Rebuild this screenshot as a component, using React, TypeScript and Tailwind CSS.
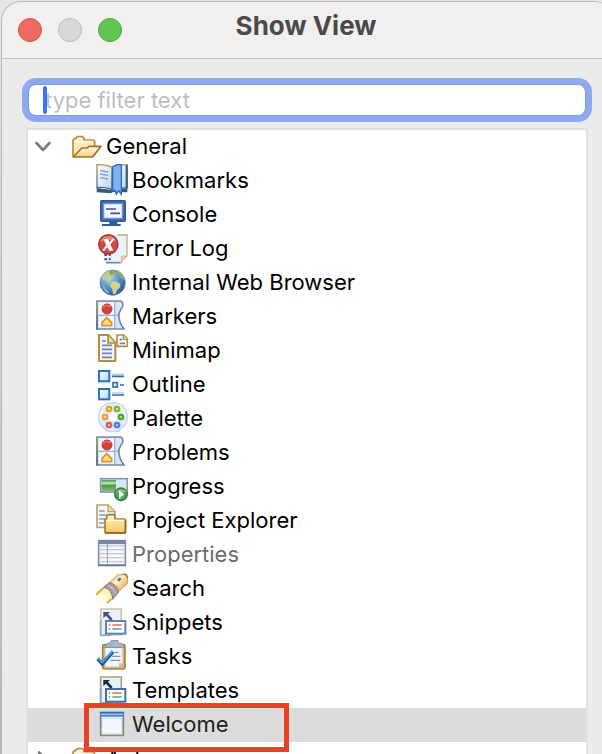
import type { ReactNode } from 'react';
import clsx from 'clsx';

// Every icon is drawn on a 96 x 102 grid, three units to the pixel
function Icon({ children }: { children: ReactNode }) {
  return (
    <svg className="h-[34px] w-8 shrink-0" viewBox="0 0 96 102" fill="none" aria-hidden="true">
      {children}
    </svg>
  );
}

function FolderIcon() {
  return (
    <Icon>
      <defs>
        <linearGradient id="folder-front" x1="0" y1="0" x2="0" y2="1">
          <stop offset="0" stopColor="#fffbe6" />
          <stop offset="1" stopColor="#f3cf7c" />
        </linearGradient>
      </defs>
      <path d="M3 78V30l5-5h4l3-5h17l4 5v5h28l4 4v17" fill="#fbe9b6" stroke="#bd8741" strokeWidth="5" strokeLinejoin="round" />
      <path d="M8 35h55M16 26h16" stroke="#fffbe9" strokeWidth="5" />
      <path d="M3 81L30 54h16l5-5h36L67 75l-7 6z" fill="url(#folder-front)" stroke="#a86d28" strokeWidth="5" strokeLinejoin="round" />
    </Icon>
  );
}

function BookmarksIcon() {
  return (
    <Icon>
      <defs>
        <linearGradient id="book-page" x1="0" y1="0" x2="1" y2="1">
          <stop offset="0" stopColor="#ffffff" />
          <stop offset="1" stopColor="#b9d4e6" />
        </linearGradient>
        <linearGradient id="book-edge" x1="0" y1="0" x2="0" y2="1">
          <stop offset="0" stopColor="#b49a56" />
          <stop offset="1" stopColor="#3c6b92" />
        </linearGradient>
      </defs>
      <path d="M2 72l46 6 46-6v13l-43-1-6 4-43-3z" fill="#35597c" />
      <path d="M3 2c18 0 34 1 45 8v68C36 70 20 69 3 71z" fill="url(#book-page)" stroke="url(#book-edge)" strokeWidth="4" />
      <path d="M48 10C60 2 76 2 94 2v70c-18-1-34 0-46 6z" fill="url(#book-page)" stroke="url(#book-edge)" strokeWidth="4" />
      <path d="M92 4v68" stroke="#365e83" strokeWidth="6" />
      <path d="M12 20l24 4M12 30l24 4M12 41l24 4" stroke="#7d9dcb" strokeWidth="4" />
      <path d="M50 9c7-7 16-8 26-7v89l-8-11-7 11-3-12-8 3z" fill="#80b2f4" stroke="#2b6cbd" strokeWidth="4" />
    </Icon>
  );
}

function ConsoleIcon() {
  return (
    <Icon>
      <path d="M40 70h24v8h10v6H18v-6h22z" fill="#335894" />
      <rect x="14" y="8" width="74" height="62" rx="3" fill="#3f6db5" stroke="#315697" strokeWidth="4" />
      <rect x="24" y="18" width="54" height="42" fill="#f2f7ff" stroke="#a8c0e4" strokeWidth="3" />
      <path d="M30 33h30M43 46h29" stroke="#44528f" strokeWidth="5" />
    </Icon>
  );
}

function ErrorLogIcon() {
  return (
    <Icon>
      <path d="M44 8h48v65L76 92H28V48z" fill="#e8f3fc" />
      <path d="M64 9h29v62" stroke="#bcb37c" strokeWidth="4" />
      <path d="M76 92V72h18z" fill="#f4cfac" stroke="#c9a884" strokeWidth="2" />
      <path d="M30 92h44" stroke="#6d83b6" strokeWidth="5" />
      <path d="M25 69h8M38 69h6M25 82h8M38 82h6" stroke="#33568e" strokeWidth="6" />
      <circle cx="37" cy="37" r="29" fill="#cf4a45" stroke="#a83331" strokeWidth="4" />
      <path d="M12 30a26 26 0 0149-2c-18-5-33-3-49 2z" fill="#e0827b" />
      <path d="M22 21h14l5 10 8-11h7L43 38l9 18H40l-6-11-9 11h-7l13-17z" fill="#fff" />
    </Icon>
  );
}

function GlobeIcon() {
  return (
    <Icon>
      <defs>
        <radialGradient id="globe" cx=".35" cy=".28" r=".75">
          <stop offset="0" stopColor="#b9dcf4" />
          <stop offset=".5" stopColor="#5c99cb" />
          <stop offset="1" stopColor="#265e9c" />
        </radialGradient>
      </defs>
      <circle cx="50" cy="50" r="38" fill="url(#globe)" stroke="#477fae" strokeWidth="2" />
      <path d="M27 22l16-9 10 1 5 8-7 5 2 6-8 3-5 8 5 6-5 2-10-9-9-2-6-8z" fill="#c4cd91" />
      <path d="M60 14l12 4 11 14 3 11-9-5-6-9-9-4z" fill="#9aab62" />
      <path d="M46 49l13-3 14 8-1 10-8 7-6 13-7 1-2-15-7-10z" fill="#d6d08a" />
      <path d="M42 12c5-1 11 2 14 8l-8 8-8-4z" fill="#8da05f" />
      <path d="M22 61a31 31 0 0016 19" stroke="#88b6db" strokeWidth="5" />
    </Icon>
  );
}

function MarkersIcon() {
  return (
    <Icon>
      <defs>
        <linearGradient id="marker-frame" gradientUnits="userSpaceOnUse" x1="0" y1="0" x2="0" y2="90">
          <stop offset="0" stopColor="#a89f68" />
          <stop offset="1" stopColor="#59719f" />
        </linearGradient>
      </defs>
      <path d="M3 3h72c8 6 8 15 0 25-8 12-8 18-4 34 3 10 7 18 13 25H3z" fill="#d7e6f7" />
      <path d="M9 9h45v34H9zM9 49h45v33H9z" fill="#f5faff" />
      <path d="M56 3v83M4 46h66" stroke="#9fb5db" strokeWidth="4" />
      <path d="M2 3h73c8 6 8 15 0 25-8 12-8 18-4 34 3 10 7 18 13 25H2" stroke="#7588aa" strokeWidth="5" />
      <path d="M3 1v88" stroke="url(#marker-frame)" strokeWidth="6" />
      <circle cx="33" cy="27" r="15" fill="#db3f3c" stroke="#c13b3c" strokeWidth="3" />
      <path d="M22 23c4-9 18-9 22-1" stroke="#ee7771" strokeWidth="4" />
      <path d="M18 77V68l14-15 15 15v9z" fill="#ffe27e" stroke="#dc9138" strokeWidth="5" strokeLinejoin="round" />
    </Icon>
  );
}

function MinimapIcon() {
  return (
    <Icon>
      <path d="M9 3h28l21 22v56H9z" fill="#eef5ff" stroke="#b1903f" strokeWidth="6" />
      <path d="M36 4v23h22" fill="#e8d8a9" stroke="#b1903f" strokeWidth="5" />
      <path d="M18 21h12M18 34h30M18 46h30M18 58h30M18 70h30" stroke="#7181b0" strokeWidth="5" />
      <path d="M63 3h20l11 11v23H63z" fill="#f5f9ff" stroke="#b1903f" strokeWidth="5" />
      <path d="M82 3v13h12" fill="#e8d8a9" stroke="#b1903f" strokeWidth="4" />
      <path d="M71 17h7M71 28h16" stroke="#7181b0" strokeWidth="5" />
    </Icon>
  );
}

function OutlineIcon() {
  return (
    <Icon>
      <defs>
        <linearGradient id="outline-box" x1="0" y1="0" x2="1" y2="1">
          <stop offset="0" stopColor="#fff" />
          <stop offset="1" stopColor="#acd5f7" />
        </linearGradient>
      </defs>
      <rect x="9" y="9" width="31" height="31" fill="url(#outline-box)" stroke="#3270b2" strokeWidth="6" />
      <rect x="9" y="63" width="31" height="31" fill="url(#outline-box)" stroke="#3270b2" strokeWidth="6" />
      <rect x="51" y="44" width="13" height="13" fill="#e3f2ff" stroke="#3270b2" strokeWidth="5" />
      <path d="M48 19h36M48 75h36" stroke="#b1d4f0" strokeWidth="5" />
      <path d="M48 25h36M72 51h12M48 81h36" stroke="#35679d" strokeWidth="5" />
    </Icon>
  );
}

const paletteDots = [
  { cx: 39, cy: 21, stroke: '#dea31c', fill: '#ffe56e' },
  { cx: 63, cy: 21, stroke: '#79b431', fill: '#d5ec8b' },
  { cx: 27, cy: 45, stroke: '#ef9c35', fill: '#ffe08b' },
  { cx: 75, cy: 45, stroke: '#4da131', fill: '#aad785' },
  { cx: 39, cy: 69, stroke: '#d55c5d', fill: '#f5aaa4' },
  { cx: 63, cy: 69, stroke: '#477ee0', fill: '#9fc0ff' },
];

function PaletteIcon() {
  return (
    <Icon>
      <path d="M51 2c27 0 43 18 43 43 0 18-9 31-23 38l-2 6H33l-2-6C17 77 8 63 8 45 8 20 24 2 51 2z" fill="#e1eaf7" stroke="#c8d5ea" strokeWidth="4" />
      <path d="M32 11c-14 8-19 20-18 38M69 11c14 8 19 20 18 38" stroke="#f5f8ff" strokeWidth="5" />
      <circle cx="51" cy="45" r="12" fill="#fff" />
      {paletteDots.map((dot) => (
        <circle key={`${dot.cx}-${dot.cy}`} cx={dot.cx} cy={dot.cy} r="7" fill={dot.fill} stroke={dot.stroke} strokeWidth="6" />
      ))}
    </Icon>
  );
}

function ProgressIcon() {
  return (
    <Icon>
      <defs>
        <linearGradient id="progress-bar" x1="0" y1="0" x2="0" y2="1">
          <stop offset="0" stopColor="#479752" />
          <stop offset=".3" stopColor="#c6e5b9" />
          <stop offset=".5" stopColor="#4c9a50" />
          <stop offset="1" stopColor="#83b96f" />
        </linearGradient>
      </defs>
      <rect x="14" y="26" width="80" height="40" fill="#d7e6f1" stroke="#849aad" strokeWidth="5" />
      <rect x="17" y="30" width="43" height="33" fill="url(#progress-bar)" />
      <circle cx="75" cy="73" r="19" fill="#4fa253" stroke="#327b48" strokeWidth="4" />
      <path d="M59 69c3-15 27-17 33-2z" fill="#85bd77" />
      <path d="M69 60l15 13-15 14z" fill="#fff" />
    </Icon>
  );
}

function ProjectExplorerIcon() {
  return (
    <Icon>
      <defs>
        <linearGradient id="project-folder" x1="0" y1="0" x2="0" y2="1">
          <stop offset="0" stopColor="#fff5c6" />
          <stop offset="1" stopColor="#f2c766" />
        </linearGradient>
      </defs>
      <path d="M3 3h34l20 20v47H3z" fill="#f3f8ff" stroke="#b3a46e" strokeWidth="5" />
      <path d="M36 3v20h20" fill="#f0dcaa" stroke="#c2a45f" strokeWidth="4" />
      <path d="M9 21h17M9 33h24M9 45h18M9 57h15" stroke="#8099cf" strokeWidth="4" />
      <path d="M27 86V45h5v-9l5-4h16l4 4v9h29l3 4v34l-3 4z" fill="url(#project-folder)" stroke="#b27a31" strokeWidth="5" strokeLinejoin="round" />
      <path d="M31 49h54M37 38h15" stroke="#fffbe0" strokeWidth="4" />
      <path d="M28 87h60V48" stroke="#945e23" strokeWidth="4" />
    </Icon>
  );
}

function PropertiesIcon() {
  return (
    <Icon>
      <rect x="8" y="8" width="80" height="74" fill="#f7f9fc" stroke="#8190ae" strokeWidth="5" />
      <path d="M8 12h80" stroke="#7887a5" strokeWidth="12" />
      <path d="M11 23h74" stroke="#cad4e4" strokeWidth="6" />
      <path d="M11 35h74M11 47h74M11 59h74M11 71h74" stroke="#c2c7d0" strokeWidth="4" />
      <path d="M34 18v63" stroke="#92a1bb" strokeWidth="3" />
      <path d="M6 82h84" stroke="#647695" strokeWidth="5" />
    </Icon>
  );
}

function SearchIcon() {
  return (
    <Icon>
      <defs>
        <linearGradient id="torch" x1="0" y1="0" x2="1" y2="1">
          <stop offset="0" stopColor="#e9a94d" />
          <stop offset=".4" stopColor="#fff2bd" />
          <stop offset="1" stopColor="#d98c36" />
        </linearGradient>
        <linearGradient id="torch-beam" x1="1" y1="0" x2="0" y2="1">
          <stop offset="0" stopColor="#ffe98c" />
          <stop offset=".6" stopColor="#fffbe2" />
          <stop offset="1" stopColor="#ffffff" />
        </linearGradient>
      </defs>
      <path d="M0 66l24-20c14 3 24 14 24 34L36 94H0z" fill="url(#torch-beam)" />
      <path d="M0 68l23-21M33 94l14-14" stroke="#f0a53f" strokeWidth="6" />
      <path d="M40 32L66 8h22l7 8v18L66 60z" fill="url(#torch)" stroke="#d39b55" strokeWidth="3" />
      <path d="M23 46l16-14c15 2 27 13 29 29L50 82c-1-20-11-33-27-36z" fill="#a49c9e" stroke="#83797b" strokeWidth="3" />
      <path d="M36 41c12 4 20 13 22 25" stroke="#c3bcbc" strokeWidth="5" />
      <path d="M81 6l10 2 4 11" stroke="#a77b55" strokeWidth="5" />
      <path d="M66 26l8-7" stroke="#2c5fad" strokeWidth="7" />
    </Icon>
  );
}

function SnippetsIcon({ faded = false }: { faded?: boolean }) {
  return (
    <Icon>
      <path d="M14 9h62v78H14z" fill="#eaf1f9" stroke={faded ? '#c7c5aa' : '#aaa47c'} strokeWidth="5" />
      <path d="M14 88V43M14 88h32" stroke={faded ? '#8faaca' : '#899cb8'} strokeWidth="5" />
      <rect x="30" y="45" width="58" height="38" fill="#fff" stroke={faded ? '#5b85ba' : '#3e6da9'} strokeWidth="6" />
      <path d="M38 57h5M49 57h28" stroke="#e06b69" strokeWidth="5" />
      <path d="M38 69h5M49 69h28" stroke="#5ba86d" strokeWidth="5" />
      <path d="M22 18h20l-6 6 14 15-6 5-14-15-8 7z" fill={faded ? '#405375' : '#172b52'} />
    </Icon>
  );
}

function TasksIcon() {
  return (
    <Icon>
      <rect x="20" y="14" width="67" height="73" rx="5" fill="#d9b37a" stroke="#af8345" strokeWidth="5" />
      <path d="M28 23h51v47L69 80H28z" fill="#f2f7ff" stroke="#cddbed" strokeWidth="2" />
      <path d="M69 80V70h10z" fill="#b4c6df" />
      <path d="M26 22l8-12h8L46 1h18l5 9h8l8 12z" fill="#a9b7cd" stroke="#7c8eae" strokeWidth="3" />
      <path d="M55 37h13M48 49h25M43 61h30" stroke="#8392b8" strokeWidth="4" />
      <path d="M5 56l14 15 32-36" stroke="#19589b" strokeWidth="11" />
      <path d="M6 55l13 12 31-34" stroke="#4b9be5" strokeWidth="6" />
    </Icon>
  );
}

function WelcomeIcon() {
  return (
    <Icon>
      <defs>
        <linearGradient id="welcome-frame" x1="0" y1="0" x2="0" y2="1">
          <stop offset="0" stopColor="#5e7fa8" />
          <stop offset="1" stopColor="#99875d" />
        </linearGradient>
      </defs>
      <rect x="14" y="14" width="68" height="68" fill="#e5f3fd" stroke="url(#welcome-frame)" strokeWidth="5" />
      <path d="M19 32h57v45H19z" fill="#f1f9ff" stroke="#d0e7f7" strokeWidth="3" />
      <path d="M12 19h72" stroke="#4d85c3" strokeWidth="14" />
      <path d="M15 19h66" stroke="#94c4ec" strokeWidth="4" />
      <path d="M12 13h72" stroke="#30649e" strokeWidth="3" />
    </Icon>
  );
}

function Chevron({ open = false }: { open?: boolean }) {
  return (
    <svg className={clsx('h-4 w-4 shrink-0', !open && '-rotate-90')} viewBox="0 0 16 16" fill="none" aria-hidden="true">
      <path d="M1.5 4l6.5 7 6.5-7" stroke="#7b7b7b" strokeWidth="2.6" strokeLinecap="round" strokeLinejoin="round" />
    </svg>
  );
}

const views = [
  { name: 'Bookmarks', icon: <BookmarksIcon /> },
  { name: 'Console', icon: <ConsoleIcon /> },
  { name: 'Error Log', icon: <ErrorLogIcon /> },
  { name: 'Internal Web Browser', icon: <GlobeIcon /> },
  { name: 'Markers', icon: <MarkersIcon /> },
  { name: 'Minimap', icon: <MinimapIcon /> },
  { name: 'Outline', icon: <OutlineIcon /> },
  { name: 'Palette', icon: <PaletteIcon /> },
  { name: 'Problems', icon: <MarkersIcon /> },
  { name: 'Progress', icon: <ProgressIcon /> },
  { name: 'Project Explorer', icon: <ProjectExplorerIcon /> },
  { name: 'Properties', icon: <PropertiesIcon />, disabled: true },
  { name: 'Search', icon: <SearchIcon /> },
  { name: 'Snippets', icon: <SnippetsIcon faded /> },
  { name: 'Tasks', icon: <TasksIcon /> },
  { name: 'Templates', icon: <SnippetsIcon /> },
  { name: 'Welcome', icon: <WelcomeIcon />, selected: true },
];

function Category({ name, open = false }: { name: string; open?: boolean }) {
  return (
    <button type="button" className="flex h-[34px] w-full items-center pl-[7px] text-left" aria-expanded={open}>
      <Chevron open={open} />
      <span className="ml-[21px] flex items-center gap-[2px]">
        <FolderIcon />
        <span className="pb-[2px]">{name}</span>
      </span>
    </button>
  );
}

export default function App() {
  return (
    <div className="h-screen overflow-hidden bg-linear-to-b from-[#e6e6e6] to-[#b4b4b4] pt-px pl-px font-['Inter','Liberation_Sans',sans-serif] text-[22px] leading-8 text-black">
      <main className="-mr-3 min-h-full rounded-t-[20px] border-t border-l border-[#b9b9b9] bg-[#ebebeb]">
        <header className="relative flex h-[57px] items-center rounded-t-[20px] border-b border-[#c3c3c3] bg-[#f1f0ee] pl-4">
          <div className="flex gap-4">
            <button type="button" aria-label="Close" className="h-6 w-6 rounded-full border border-[#d55448] bg-[#ed6b60]" />
            <button type="button" aria-label="Minimize" className="h-6 w-6 rounded-full border border-[#bcbcba] bg-[#d8d8d6]" />
            <button type="button" aria-label="Zoom" className="h-6 w-6 rounded-full border border-[#4ba83e] bg-[#61c554]" />
          </div>
          <h1 className="absolute top-2 right-1 left-0 text-center text-[26px] font-bold text-[#4a4a4a]">Show View</h1>
        </header>

        <div className="pt-[25px] pr-[26px] pl-6">
          <div className="relative mx-[2px]">
            <input
              type="text"
              aria-label="Filter views"
              placeholder="type filter text"
              className="block h-8 w-full rounded-lg border border-[#7d9ae0] bg-white pl-4 ring-[6px] ring-[#8ea9ed] outline-none placeholder:text-[#bebebe]"
            />
            <span className="absolute top-[2px] left-[15px] h-7 w-1 rounded-full bg-[#3478f6]" />
          </div>

          <div className="mt-3 border-2 border-[#e2e2e2] bg-white">
            <Category name="General" open />
            <ul>
              {views.map((view) => (
                <li key={view.name} className={clsx('relative', view.selected && 'bg-[#dcdcdc] text-[#222222]')}>
                  <button
                    type="button"
                    disabled={view.disabled}
                    className={clsx('flex h-[34px] w-full items-center gap-1 pl-[68px] text-left', view.disabled && 'text-[#6c6c6c]')}
                  >
                    {view.icon}
                    <span className="pb-[2px]">{view.name}</span>
                  </button>
                  {view.selected && (
                    <span className="pointer-events-none absolute -top-[5px] left-14 z-10 h-[49px] w-[205px] border-[5px] border-[#ea4025]" />
                  )}
                </li>
              ))}
            </ul>
            <Category name="Ant" />
          </div>
        </div>
      </main>
    </div>
  );
}
